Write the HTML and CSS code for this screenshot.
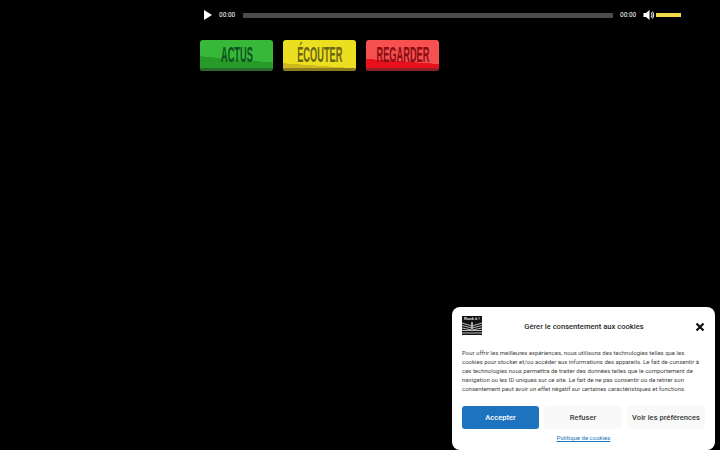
FILE: index.html
```html
<!DOCTYPE html>
<html lang="fr">
<head>
<meta charset="utf-8">
<title>Rock</title>
<link rel="stylesheet" href="styles.css">
</head>
<body>
<main class="content">
  <div class="player">
    <svg class="play" width="10" height="12" viewBox="0 0 10 12"><path d="M1 1.000 9 6 1 11z" fill="#fff"/></svg>
    <span class="time">00:00</span>
    <div class="track"></div>
    <span class="time">00:00</span>
    <svg class="mute" width="12" height="12" viewBox="0 0 12 12"><path d="M0.500 4H3L6.500 1V11L3 8H0.500z" fill="#fff"/><path d="M8 3.500Q10 6 8 8.500M9.500 2.500Q11.700 6 9.500 9.500" stroke="#ddd" stroke-width="1.100" fill="none"/></svg>
    <div class="volume"></div>
  </div>
  <nav class="menu">
    <a class="tile green"><span class="label">ACTUS</span></a>
    <a class="tile yellow"><span class="label">ÉCOUTER</span></a>
    <a class="tile red"><span class="label">REGARDER</span></a>
  </nav>
</main>
<aside class="consent">
  <header class="head">
    <div class="logo">
      <span class="logo-text">Rock it !</span>
      <svg width="20" height="13" viewBox="0 0 20 13"><path d="M0 1 10 4 20 1M0 3.500 10 6 20 3.500M0 6 10 8 20 6M0 8.500H20M0 11H20" stroke="#bbb" stroke-width="1" fill="none"/><path d="M10 0V7" stroke="#ccc" stroke-width="1.500"/></svg>
    </div>
    <h2 class="title">Gérer le consentement aux cookies</h2>
    <svg class="close" width="10" height="10" viewBox="0 0 10 10"><path d="M1.500 1.500 8.500 8.500M8.500 1.500 1.500 8.500" stroke="#111" stroke-width="2.200"/></svg>
  </header>
  <p class="message">Pour offrir les meilleures expériences, nous utilisons des technologies telles que les cookies pour stocker et/ou accéder aux informations des appareils. Le fait de consentir à ces technologies nous permettra de traiter des données telles que le comportement de navigation ou les ID uniques sur ce site. Le fait de ne pas consentir ou de retirer son consentement peut avoir un effet négatif sur certaines caractéristiques et fonctions.</p>
  <div class="actions">
    <button class="btn accept">Accepter</button>
    <button class="btn plain">Refuser</button>
    <button class="btn plain">Voir les préférences</button>
  </div>
  <a class="policy">Politique de cookies</a>
</aside>
</body>
</html>
```
FILE: styles.css
```css
* { box-sizing: border-box; }
html, body { margin: 0; height: 100%; background: #000; overflow: hidden; }
.content { padding: 0 39px 0 200px; }
.player { display: flex; align-items: center; height: 30px; padding-left: 3px; }
.play { flex: none; margin-right: 6px; }
.time { flex: none; font: 500 6.400px/1 "Roboto", sans-serif; color: #d8d8d8; width: 16px; white-space: nowrap; }
.track { flex: 1; height: 5px; margin: 0 7px 0 8px; background: #4b4b4b; }
.mute { flex: none; margin-left: 7px; margin-right: 1px; }
.volume { flex: none; width: 25px; height: 4px; background: #eedc4a; }
.menu { display: flex; gap: 10px; margin-top: 10px; }
.tile { position: relative; display: flex; align-items: center; justify-content: center; width: 73px; height: 31px; padding-bottom: 2px; border-radius: 3px; overflow: hidden; }
.tile::after { content: ""; position: absolute; left: 0; right: 0; bottom: 0; height: 3px; }
.label { font: 700 22px/1 "Liberation Sans", sans-serif; transform: scaleX(0.42); white-space: nowrap; position: relative; z-index: 1; }
.green { background: linear-gradient(185deg, #38b838 0 60%, #279a27 61% 100%); }
.green::after { background: #2a6a2a; }
.green .label { color: #0c5220; }
.yellow { background: linear-gradient(184deg, #ecdf20 0 78%, #cdb91e 79% 100%); }
.yellow::after { background: #8c7c20; }
.yellow .label { color: #6a6414; }
.red { background: linear-gradient(184deg, #f65050 0 66%, #e8101c 67% 100%); }
.red::after { background: #902028; }
.red .label { color: #8a0c14; }
.consent { position: fixed; left: 452px; top: 307px; width: 263px; height: 143px; background: #fff; border-radius: 8px; padding: 8px 10px 0; font-family: "Roboto", sans-serif; }
.head { display: flex; align-items: center; height: 20px; }
.logo { flex: none; width: 20px; height: 19px; background: #111; display: flex; flex-direction: column; align-items: center; overflow: hidden; }
.logo svg { display: block; flex: none; }
.logo-text { font: 700 4px/6px "Liberation Sans", sans-serif; color: #eee; white-space: nowrap; }
.title { flex: 1; margin: 3px 0 0; padding-right: 9px; text-align: center; font: 500 7.600px/1 "Roboto", sans-serif; color: #2a2a2a; }
.close { flex: none; margin: 3px 0 0; }
.message { margin: 13px 0 0; font-size: 6px; line-height: 9px; color: #444; }
.actions { display: flex; gap: 5px; margin-top: 13px; }
.btn { height: 23px; border: 0; border-radius: 3px; font: 500 7.600px/1 "Roboto", sans-serif; padding: 0; }
.accept { width: 77px; background: #1e73be; color: #fff; }
.plain { background: #f9f9f9; color: #3a3a3a; }
.plain:nth-child(2) { width: 78px; }
.plain:nth-child(3) { width: 78px; }
.policy { display: block; margin-top: 5px; text-align: center; font-size: 6px; line-height: 8px; color: #1e73be; text-decoration: underline; }
```
